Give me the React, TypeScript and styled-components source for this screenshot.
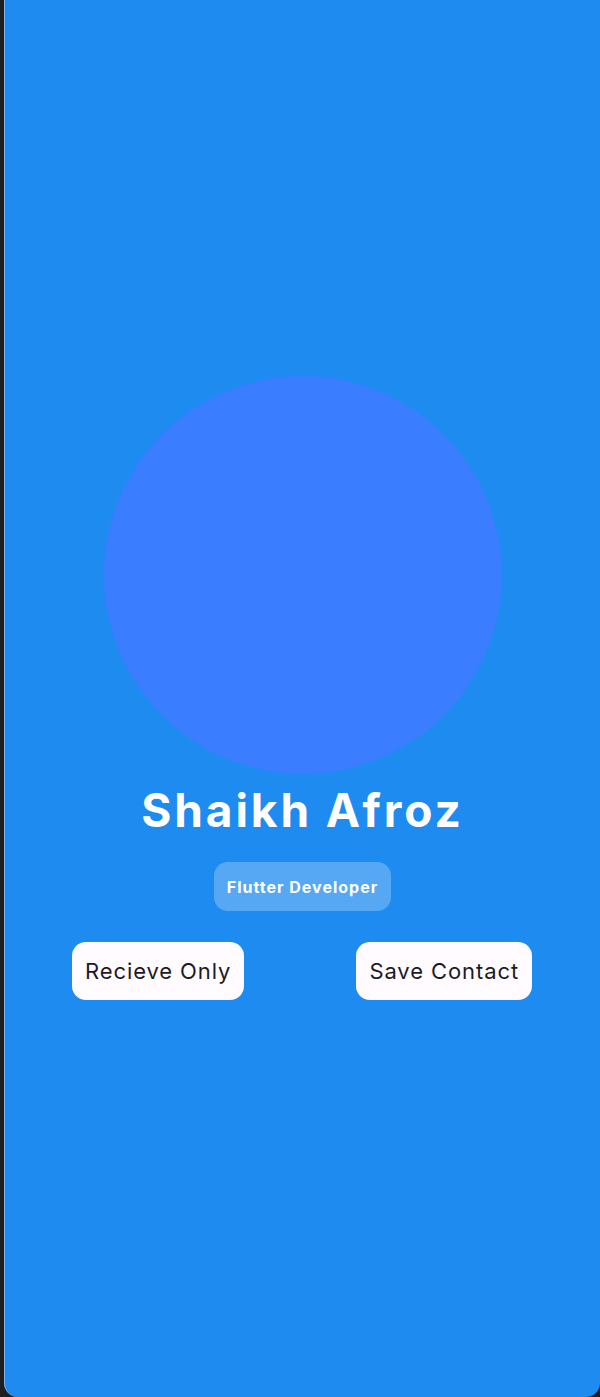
import React from "react";
import styled, { createGlobalStyle } from "styled-components";

const Global = createGlobalStyle`
  html, body { margin: 0; padding: 0; background: #1f1f22; }
  body { font-family: Inter, "Noto Sans", sans-serif; }
`;

const Frame = styled.div`
  width: 600px;
  height: 1397px;
  display: flex;
  background: #1f1f22;
  box-sizing: border-box;
  padding-left: 4px;
`;

const Screen = styled.main`
  flex: 1;
  background: #1e8bf0;
  border-left: 1px solid #7fb3ea;
  border-radius: 0 0 14px 14px;
  display: flex;
  flex-direction: column;
  align-items: center;
  padding-top: 376px;
  box-sizing: border-box;
`;

const Avatar = styled.div`
  width: 398px;
  height: 398px;
  border-radius: 50%;
  background: #3b7dff;
`;

const Name = styled.h1`
  margin: 9px 0 0;
  font-size: 46px;
  line-height: 54px;
  font-weight: 700;
  color: #ffffff;
  letter-spacing: 2.9px;
`;

const Chip = styled.div`
  margin-top: 25px;
  height: 49px;
  padding: 0 13px;
  display: flex;
  align-items: center;
  border-radius: 14px;
  background: rgba(255, 255, 255, 0.25);
  color: #ffffff;
  font-size: 16px;
  font-weight: 700;
  letter-spacing: 1px;
`;

const Actions = styled.div`
  align-self: stretch;
  margin-top: 31px;
  display: flex;
  justify-content: space-between;
  padding: 0 68px 0 67px;
`;

const Button = styled.button`
  height: 58px;
  padding: 0 13px;
  border: none;
  border-radius: 14px;
  background: #fffbff;
  color: #1b1b1f;
  font-family: Inter, "Noto Sans", sans-serif;
  font-size: 22px;
  font-weight: 400;
  letter-spacing: 0.9px;
  cursor: pointer;
`;

export default function App() {
  return (
    <>
      <Global />
      <Frame>
        <Screen>
          <Avatar />
          <Name>Shaikh Afroz</Name>
          <Chip>Flutter Developer</Chip>
          <Actions>
            <Button>Recieve Only</Button>
            <Button>Save Contact</Button>
          </Actions>
        </Screen>
      </Frame>
    </>
  );
}
